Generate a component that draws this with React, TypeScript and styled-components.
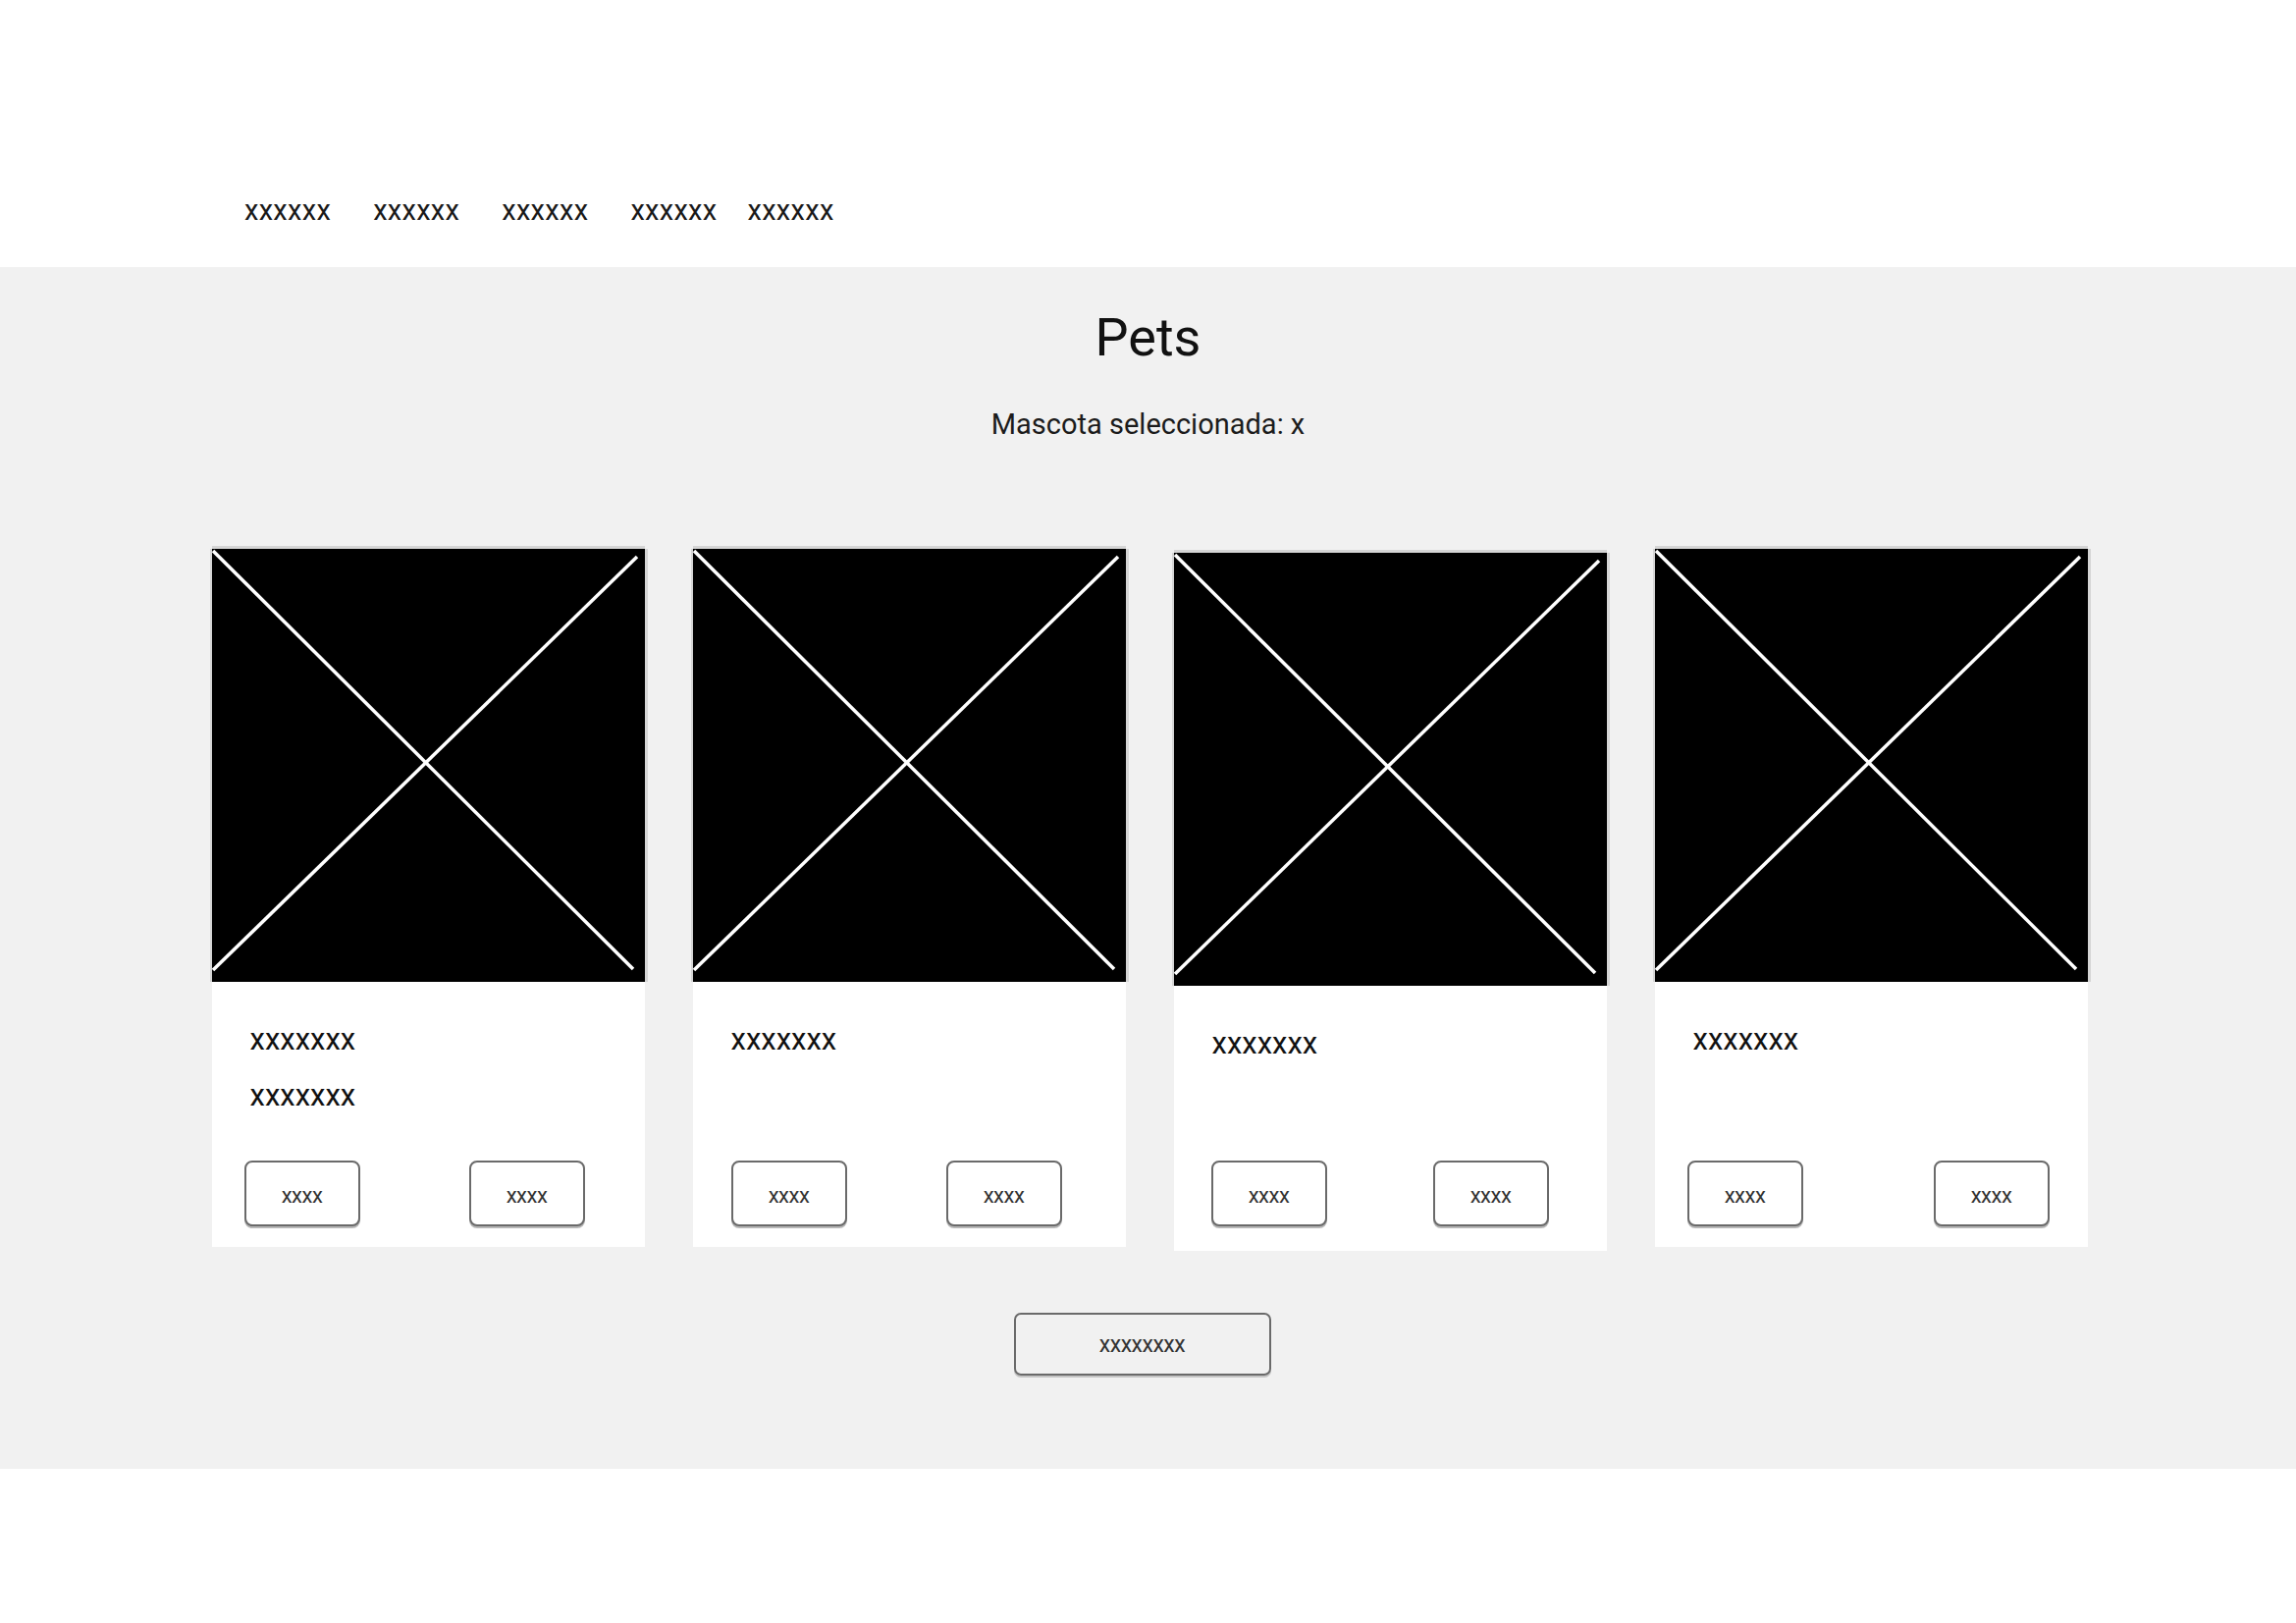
import React from 'react'
import styled, { createGlobalStyle } from 'styled-components'

type Pet = {
  lines: string[]
  padLeft: number
  padRight: number
  drop?: number
}

const pets: Pet[] = [
  { lines: ['xxxxxxx', 'xxxxxxx'], padLeft: 33, padRight: 61 },
  { lines: ['xxxxxxx'], padLeft: 39, padRight: 65 },
  { lines: ['xxxxxxx'], padLeft: 38, padRight: 59, drop: 4 },
  { lines: ['xxxxxxx'], padLeft: 33, padRight: 39 },
]

const navItems = ['xxxxxx', 'xxxxxx', 'xxxxxx', 'xxxxxx', 'xxxxxx']

const GlobalStyle = createGlobalStyle`
  html, body {
    margin: 0;
    padding: 0;
    background: #fff;
  }
  body {
    font-family: Roboto, 'Liberation Sans', sans-serif;
    color: #111;
    min-height: 1653px;
  }
`

const Placeholder: React.FC = () => (
  <ImageBox>
    <svg width="100%" height="100%" viewBox="0 0 441 441" preserveAspectRatio="none">
      <line x1="1" y1="2" x2="429" y2="428" stroke="#fff" strokeWidth="3.5" />
      <line x1="1" y1="429" x2="433" y2="8" stroke="#fff" strokeWidth="3.5" />
    </svg>
  </ImageBox>
)

const PetCard: React.FC<{ pet: Pet }> = ({ pet }) => {
  const drop = pet.drop ?? 0
  return (
    <Card $drop={drop}>
      <Placeholder />
      <CardBody $drop={drop}>
        <Lines>
          {pet.lines.map((l, i) => (
            <Line key={i}>{l}</Line>
          ))}
        </Lines>
        <Actions $pl={pet.padLeft} $pr={pet.padRight}>
          <SmallButton>xxxx</SmallButton>
          <SmallButton>xxxx</SmallButton>
        </Actions>
      </CardBody>
    </Card>
  )
}

const App: React.FC = () => {
  return (
    <>
      <GlobalStyle />
      <Header>
        <Nav>
          {navItems.map((n, i) => (
            <NavItem key={i} $tight={i === navItems.length - 1}>
              {n}
            </NavItem>
          ))}
        </Nav>
      </Header>
      <Main>
        <Title>Pets</Title>
        <Selected>Mascota seleccionada: x</Selected>
        <Grid>
          {pets.map((p, i) => (
            <PetCard key={i} pet={p} />
          ))}
        </Grid>
        <WideButton>xxxxxxxx</WideButton>
      </Main>
    </>
  )
}

const Header = styled.header`
  height: 272px;
  box-sizing: border-box;
  padding: 197px 0 0 249px;
  background: #fff;
`

const Nav = styled.nav`
  display: flex;
  align-items: flex-start;
`

const NavItem = styled.a<{ $tight?: boolean }>`
  font-size: 29px;
  line-height: 34px;
  letter-spacing: 0.3px;
  color: #1a1a1a;
  margin-left: ${(p) => (p.$tight ? '-12px' : '0')};
  margin-right: 43px;
  cursor: pointer;
`

const Main = styled.main`
  background: #f1f1f1;
  display: flex;
  flex-direction: column;
  align-items: center;
  padding: 40px 0 95px;
`

const Title = styled.h1`
  margin: 0;
  font-size: 54px;
  line-height: 64px;
  font-weight: 400;
  color: #111;
`

const Selected = styled.p`
  margin: 39px 0 0;
  font-size: 29px;
  line-height: 34px;
  color: #1c1c1c;
`

const Grid = styled.section`
  display: grid;
  grid-template-columns: repeat(4, 441px);
  column-gap: 49px;
  margin-top: 110px;
  margin-left: 3px;
`

const Card = styled.article<{ $drop: number }>`
  display: flex;
  flex-direction: column;
  margin-top: ${(p) => p.$drop}px;
  margin-bottom: ${(p) => -p.$drop}px;
`

const ImageBox = styled.div`
  width: 441px;
  height: 441px;
  background: #000;
  box-shadow: 0 -3px 0 0 #d5d5d5, -2px 0 0 0 #d5d5d5, 3px 0 0 0 #d5d5d5;
  svg {
    display: block;
  }
`

const CardBody = styled.div<{ $drop: number }>`
  background: #fff;
  height: 270px;
  box-sizing: border-box;
  padding: 41px 0 ${(p) => 21 + p.$drop}px;
  display: flex;
  flex-direction: column;
`

const Lines = styled.div`
  display: flex;
  flex-direction: column;
  gap: 21px;
  padding-left: 39px;
`

const Line = styled.span`
  font-size: 31px;
  line-height: 36px;
  color: #111;
`

const Actions = styled.div<{ $pl: number; $pr: number }>`
  margin-top: auto;
  display: flex;
  justify-content: space-between;
  padding-left: ${(p) => p.$pl}px;
  padding-right: ${(p) => p.$pr}px;
`

const SmallButton = styled.button`
  width: 118px;
  height: 67px;
  box-sizing: border-box;
  background: #fff;
  border: 2px solid #6a6a6a;
  border-radius: 8px;
  box-shadow: 0 2px 0 0 #b8b8b8;
  font-family: Roboto, 'Liberation Sans', sans-serif;
  font-size: 22px;
  letter-spacing: -0.5px;
  color: #333;
  padding: 4px 0 0;
  cursor: pointer;
`

const WideButton = styled.button`
  margin-top: 67px;
  margin-right: 12px;
  width: 262px;
  height: 64px;
  box-sizing: border-box;
  background: transparent;
  border: 2px solid #6a6a6a;
  border-radius: 7px;
  box-shadow: 0 2px 0 0 #c4c4c4;
  font-family: Roboto, 'Liberation Sans', sans-serif;
  font-size: 23px;
  letter-spacing: -0.5px;
  color: #333;
  cursor: pointer;
`

export default App
